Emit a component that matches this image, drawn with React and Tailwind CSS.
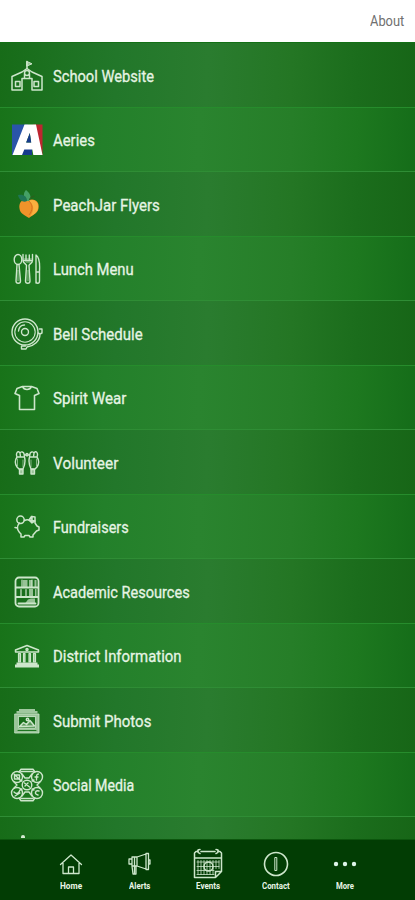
import React, { useLayoutEffect, useRef, useState } from "react";

// Label squeezed horizontally to a narrow, condensed width.
function FitText({ width, className, children }) {
  const ref = useRef(null);
  const [scale, setScale] = useState(1);
  useLayoutEffect(() => {
    const el = ref.current;
    if (el) setScale(width / el.offsetWidth);
  }, [width]);
  return (
    <span className={"flex " + className} style={{ width }}>
      <span style={{ transform: `scaleX(${scale})` }} className="origin-left">
        <span ref={ref} className="block whitespace-nowrap">{children}</span>
      </span>
    </span>
  );
}

const Svg = ({ w, h, sw = 1.4, children }) => (
  <svg width={w} height={h} viewBox={`0 0 ${w} ${h}`} fill="none" stroke="#cde6cb" strokeWidth={sw} strokeLinecap="round" strokeLinejoin="round">
    {children}
  </svg>
);

const School = () => (
  <Svg w={32} h={32} sw={1.5}>
    <path d="M1 30V16.500L11 12l5-3.500 5 3.500 10 4.500V30H21V18.500H11V30z" />
    <path d="M16 8.500V1.500M13.500 18v-3.500M18.500 18v-3.500M4.500 21.500h4.500v5H4.500zM23 21.500h4.500v5H23z" />
    <path d="M16 1.500l5 2.300-5 2.200z" fill="#cde6cb" fillOpacity=".7" strokeWidth="1" />
    <circle cx="16" cy="13" r="2.500" />
  </Svg>
);

const AeriesLogo = () => (
  <svg width="32" height="32" viewBox="0 0 32 32">
    <path d="M1 0.500h16L8 31H1z" fill="#2a55a8" />
    <path d="M22 0.500h9.500V31H29z" fill="#bd2630" />
    <path d="M9 22h12v9H7z" fill="#163b8c" />
    <path fillRule="evenodd" d="M13.500 0.500H25L31.500 31h-9.200l-1-5.500h-8L11 31H1.500zM18.800 9l-3.600 9.500h5z" fill="#fff" />
    <path d="M18.800 9l-3.600 9.500h5z" fill="#163b8c" />
  </svg>
);

const Peach = () => (
  <svg width="32" height="32" viewBox="0 0 32 32">
    <path d="M17 11.500c6-3 12 1 10.500 8-1 5-5 6-9.500 9.500-4.500-3-9-4.500-9.500-9.500-1-7 3.500-10 8.500-8z" fill="#f0932a" />
    <path d="M18 11.500c6-2 10 2 9 8-1 4-4 6-8 8 4-5 5-11-1-16z" fill="#f9b03f" />
    <path d="M18 12c4 4 4 9 0 14" fill="none" stroke="#d87420" />
    <path d="M16 12c-4-3-4-8-1-11 4 3 6 7 3 11z" fill="#45a065" />
    <path d="M16 12c-4 2-8-1-9-6 5-1 9 1 9 6z" fill="#1f7655" />
    <path d="M18.500 11c0-2 2-3.500 5-4" fill="none" stroke="#315c1c" />
  </svg>
);

const Lunch = () => (
  <Svg w={28} h={32} sw={1.4}>
    <ellipse cx="5" cy="6.500" rx="3.800" ry="5" />
    <path d="M4 11.500 3 28c0 3 4.500 3 4.500 0L6 11.500M10 1.500v6c0 3 3 3 3.500 5L12.500 28c0 3 4.500 3 4.500 0L16 12.500c.5-2 3.500-2 3.500-5v-6M13 2v5M16.300 2v5M10 7.500h9.500M23 30V2c3 2 4 8 3.500 16v10c0 3-3.500 3-3.500 0M23 19h3.500" />
    <path d="M10.500 5h8.500l-2 5h-4zM4 17h2.500v11H4zM13.500 17H16v11h-2.500z" fill="#cde6cb" fillOpacity=".35" stroke="none" />
  </Svg>
);

const Bell = () => (
  <Svg w={32} h={32} sw={1.4}>
    <circle cx="14" cy="14" r="13" />
    <circle cx="14" cy="14" r="10.200" strokeWidth="1.100" />
    <circle cx="14" cy="14" r="3.500" />
    <path d="M7.500 13c.5-4 3-6 6-6M28.500 11h2.500v4l-2 1c0 7-6 12-13 13l-1 2h-4.500v-3h4M29 16l-2-1" />
  </Svg>
);

const Shirt = () => (
  <Svg w={26} h={26} sw={1.6}>
    <path d="m8.500 1.500-5.500 2L1 8.500 5.500 10.500V24.500h15V10.500L25 8.500l-2-5-5.500-2c-1.500 4-7.500 4-9 0zM8.500 1.500h9" />
  </Svg>
);

const Hands = () => (
  <Svg w={26} h={26} sw={1.4}>
    <path d="M3 7c-2 3-2 7 0 10l2 2h4c2-4 2.500-8 1.500-12zM23 7c2 3 2 7 0 10l-2 2h-4c-2-4-2.500-8-1.500-12zM3 7C1.500 3 4 0 6 3l.5 4M6 3c1-2 4-1 4 1l.5 3M23 7c1.500-4-1-7-3-4l-.5 4M20 3c-1-2-4-1-4 1l-.5 3M10 4l3 2 3-2" />
    <circle cx="13" cy="4.500" r="1" />
    <path d="M5.500 19.500h3.500v4.500H5.500zM17 19.500h3.500v4.500H17z" fill="#cde6cb" fillOpacity=".7" />
    <path d="M3.500 9v7M9 10v7M22.500 9v7M17 10v7" strokeWidth="1" opacity=".6" />
  </Svg>
);

const Piggy = () => (
  <Svg w={26} h={24} sw={1.5}>
    <circle cx="6.500" cy="4.800" r="3.700" />
    <path d="M10.500 5.500c2-1 3.500-1 5.500 0M21 6v2l2 3 2 1v3l-2.500 1-3.500 4v2h-3l-1-1.500h-4L10 22H7v-3c-2-2-3.500-4-3.500-6L1 12.500M3.500 13c0-2 .5-3.500 2-5" />
    <path d="m15 5 2.500-3.500L21 2v4l-3 2zM18 1.500v6M15 5l6 1" />
  </Svg>
);

const Bookcase = () => (
  <Svg w={26} h={32} sw={1.8}>
    <rect x="1.500" y="1.500" width="23" height="29" rx="3.500" />
    <path d="M2 11.500h22M2 21h22M4.500 27.500h17" />
    <path d="M8 4v7M18 4v7M12 13.500v7M7 13.500v7" strokeWidth="1.200" />
    <path d="M15 13h4v7.500h-4zM9 4h4.500v7H9zM15 4h3v7h-3zM20.500 4h2v7h-2zM21 13h1.500v7.500H21zM11 27.500l3-4 3-1h4v5z" fill="#cde6cb" fillOpacity=".7" stroke="none" />
  </Svg>
);

const Bank = () => (
  <Svg w={26} h={24} sw={1.5}>
    <path d="M1.500 8V6L13 1.500 24.500 6v2z" />
    <path d="M4.500 9.500h2v8.500h-2zM9.500 9.500h1.500v8.500H9.500zM15 9.500h1.500v8.500H15zM19.500 9.500h2v8.500h-2z" fill="#cde6cb" fillOpacity=".7" strokeWidth="1.200" />
    <path d="M2.500 18.500h21v2h1.500v3H1v-3h1.500z" fill="#cde6cb" stroke="none" />
    <circle cx="13" cy="5.500" r="1" />
  </Svg>
);

const Photos = () => (
  <Svg w={26} h={26} sw={1.5}>
    <path d="M5 1h16v2h2.500v2.500h-21V3H5z" fill="#cde6cb" fillOpacity=".75" stroke="none" />
    <path fillRule="evenodd" d="M1 6h24v19H1zM4.500 9v11h17V9z" fill="#cde6cb" fillOpacity=".72" stroke="#cde6cb" strokeWidth=".8" />
    <path d="m5.500 18.500 4-4 3 2 3.500-4 4.500 5.500z" fill="#cde6cb" fillOpacity=".35" />
    <circle cx="13.500" cy="11.500" r="1.200" />
    <path d="M4 22.500h18" stroke="#1f7522" strokeWidth="1" />
  </Svg>
);

const Social = () => (
  <Svg w={34} h={34} sw={1.4}>
    <path d="M9 4 11 1.200h12L25 4M11 3.500h12M9 30l2 2.800h12L25 30M11 30.500h12M12 6l3 4h4l3-4M12 28l3-4h4l3 4M4 14l3 3-3 3M30 14l-3 3 3 3" />
    <circle cx="7" cy="9" r="5.500" />
    <circle cx="27" cy="9" r="5.500" />
    <circle cx="7" cy="25" r="5.500" />
    <circle cx="27" cy="25" r="5.500" />
    <circle cx="17" cy="17" r="4.800" />
    <path d="M4.500 7h5v4h-5zM4 6l6 6M28.500 6c-2 0-2 1-2 6M25 9h3M4 24c3 3 5 1 6-2M5 28l5-3M29 23c-4-1-5 3-1 4M14.500 15l5 4M15 18l3-3M12 13l-2-1M22 13l2-1M12 21l-2 1M22 21l2 1" />
  </Svg>
);

const items = [
  ["School Website", 101, School],
  ["Aeries", 42, AeriesLogo],
  ["PeachJar Flyers", 107, Peach],
  ["Lunch Menu", 81, Lunch],
  ["Bell Schedule", 90, Bell],
  ["Spirit Wear", 73, Shirt],
  ["Volunteer", 65, Hands],
  ["Fundraisers", 76, Piggy],
  ["Academic Resources", 137, Bookcase],
  ["District Information", 129, Bank],
  ["Submit Photos", 98, Photos],
  ["Social Media", 81, Social],
];

const Home = () => (
  <Svg w={24} h={22} sw={1.3}>
    <path d="M1.500 11.500 12 2l10.500 9.500M4 10v10.500h16V10M9.500 20.500V14h5v6.500" />
  </Svg>
);

const Megaphone = () => (
  <Svg w={24} h={24} sw={1.3}>
    <path d="M5 5h5l9-3v15l-9-3H5zM5 7H2v5h3M5 14l1 8h3v-8M10 5v9M19 1.500h2.500v16H19zM21.500 8h1.500v4h-1.500M7.500 5v16" />
  </Svg>
);

const Calendar = () => (
  <Svg w={30} h={31} sw={1.5}>
    <path d="M5 3.500H3L1.500 5v24.500h21l6-6V5L27 3.500h-2M8 3.500h14M1.500 10h27M22.500 29.500v-6h6" />
    <path d="M7 5.500c-3-1-3-4 0-4M23 5.500c3-1 3-4 0-4" />
    <path d="M5 12.500v14M8 12.500v14M11 12.500v14M14 12.500v14M17 12.500v14M20 12.500v14M23 12.500v8M26 12.500v8M4 14h22M4 18.500h22M4 22.500h17M4 26.500h17" strokeWidth=".8" />
    <circle cx="15.500" cy="18.500" r="4.500" />
  </Svg>
);

const Info = () => (
  <Svg w={26} h={26} sw={1.6}>
    <circle cx="13" cy="13" r="11.500" />
    <path d="M12.200 6.500h1.600v13h-1.600z" strokeWidth="1" />
  </Svg>
);

const More = () => (
  <svg width="24" height="6" viewBox="0 0 24 6" fill="#dff5ea">
    <circle cx="3" cy="3" r="2.200" />
    <circle cx="12" cy="3" r="2.200" />
    <circle cx="21" cy="3" r="2.200" />
  </svg>
);

const tabs = [
  ["Home", 22, Home],
  ["Alerts", 21, Megaphone],
  ["Events", 24, Calendar],
  ["Contact", 28, Info],
  ["More", 18, More],
];

export default function App() {
  return (
    <div className="flex h-[900px] w-[415px] flex-col overflow-hidden bg-white font-['Roboto',sans-serif]">
      <header className="flex h-[42px] shrink-0 items-center justify-end pr-[11px]">
        <FitText width={34} className="text-[14px] leading-5 text-[#707070]">About</FitText>
      </header>
      <main className="min-h-0 flex-1 overflow-hidden border-t border-[#137016]">
        {items.map(([label, width, Icon], i) => (
          <div
            key={label}
            className={
              "flex h-[64.5px] items-center border-b pt-[2px] " +
              (i % 2
                ? "border-[#2f8d35] bg-linear-[92deg,#187319_0%,#23802a_25%,#2a842f_48%,#267e28_70%,#1d781f_86%,#156d19_100%]"
                : "border-[#268c2c] bg-linear-[92deg,#176c18_0%,#22772a_28%,#2a7c2f_50%,#247624_70%,#1b6d1c_86%,#176617_100%]")
            }
          >
            <span className="flex w-[53px] justify-center">
              <Icon />
            </span>
            <FitText width={width} className="text-[17px] leading-6 text-[#e6f4e4] [-webkit-text-stroke:0.3px_#e6f4e4]">{label}</FitText>
          </div>
        ))}
        <div className="flex h-[22px] items-end bg-linear-[92deg,#176c18_0%,#22772a_28%,#2a7c2f_50%,#247624_70%,#1b6d1c_86%,#176617_100%] pl-[21px]">
          <span className="mb-[1px] h-[3px] w-1 rounded-t-full bg-[#d5ebd3]" />
        </div>
      </main>
      <nav className="flex h-[61px] shrink-0 justify-center border-t border-[#0c560d] bg-[#023d04]">
        {tabs.map(([label, width, Icon]) => (
          <div key={label} className="flex w-[68.5px] flex-col items-center pt-[8px]">
            <span className="flex h-[31px] items-center">
              <Icon />
            </span>
            <FitText width={width} className="mt-[1px] text-[9px] font-bold leading-3 text-[#e8f5e6]">{label}</FitText>
          </div>
        ))}
      </nav>
    </div>
  );
}
